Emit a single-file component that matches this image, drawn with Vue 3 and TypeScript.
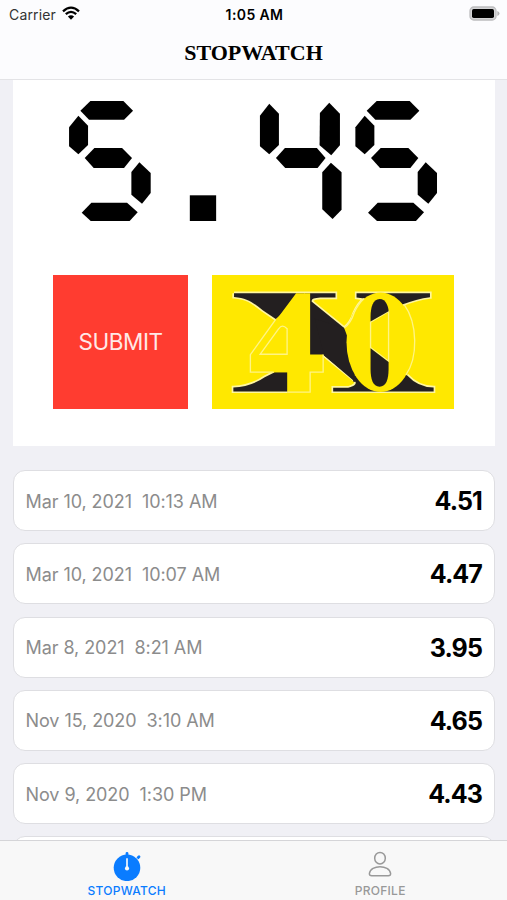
<script setup lang="ts">
import { computed, ref } from 'vue'

interface Solve {
  date: string
  time: string
  result: string
}

// Lit segments for each character, on a 286-unit wide cell.
const CELL = 286.4
const segments: Record<string, string[]> = {
  '5': [
    '34,77 64,48 163,48 192,77 165,104 60,104',
    '0,127 28,92 57,122 57,180 28,208 0,184',
    '47,219 76,189 159,189 189,219 165,249 74,249',
    '187,261 211,232 245,264 245,324 219,356 187,329',
    '38,383 67,353 174,353 206,382 181,409 66,409',
  ],
  '.': ['76,331 155,331 155,409 76,409'],
  '4': [
    '0,92 28,56 57,86 57,180 28,208 0,184',
    '180,84 208,53 240,86 240,181 214,211 179,181',
    '48,219 75,189 171,189 197,219 173,249 76,249',
    '187,262 213,233 245,262 245,374 218,402 187,373',
  ],
}

const elapsed = ref('5.45')
const cells = computed(() =>
  [...elapsed.value].map((char, i) => ({ shapes: segments[char] ?? [], x: i * CELL })),
)

const solves: Solve[] = [
  { date: 'Mar 10, 2021', time: '10:13 AM', result: '4.51' },
  { date: 'Mar 10, 2021', time: '10:07 AM', result: '4.47' },
  { date: 'Mar 8, 2021', time: '8:21 AM', result: '3.95' },
  { date: 'Nov 15, 2020', time: '3:10 AM', result: '4.65' },
  { date: 'Nov 9, 2020', time: '1:30 PM', result: '4.43' },
]
const tab = ref<'stopwatch' | 'profile'>('stopwatch')
</script>

<template>
  <div class="screen">
    <header class="top">
      <div class="status">
        <div class="carrier">
          <span>Carrier</span>
          <svg class="wifi" viewBox="0 0 18 14">
            <path d="M1 5.3Q9-2 17 5.3" />
            <path d="M3.8 8.2Q9 3.5 14.2 8.2" />
            <path class="solid" d="M5.9 10.5Q9 7.8 12.1 10.5L9 13.7Z" />
          </svg>
        </div>
        <span class="clock">1:05 AM</span>
        <div class="power">
          <svg class="battery" viewBox="0 0 31 15">
            <rect x="1" y="1" width="26" height="13" rx="3.8" fill="#d4d4d6" stroke="#bcbcbe" stroke-width="1.3" />
            <rect x="3" y="3" width="22" height="9" rx="1.7" fill="#000" />
            <path d="M28.3 5.1Q30.5 5.8 30.5 7.5T28.3 9.9Z" fill="#b4b4b6" />
          </svg>
        </div>
      </div>
      <h1>STOPWATCH</h1>
    </header>

    <main>
      <section class="timer">
        <svg class="display" viewBox="0 48 1107 361" role="img" :aria-label="elapsed">
          <g v-for="(cell, i) in cells" :key="i" :transform="`translate(${cell.x} 0)`">
            <polygon v-for="points in cell.shapes" :key="points" :points="points" />
          </g>
        </svg>
        <div class="actions">
          <button class="submit">SUBMIT</button>
          <button class="brand" aria-label="Start">
            <svg viewBox="22 18 725 404" preserveAspectRatio="none">
              <g class="halo">
                <path d="M88 73H392V86H346Q316 88 321 99L418 178Q438 164 448 132Q460 105 478 89L455 86V73H675V85Q635 90 590 108" />
                <path d="M88 73V84C130 88 142 99 174 124L213 151M207 312L180 326Q140 354 86 357V369H248M357 260L449 335Q462 349 430 358H385V369H686V357Q640 357 606 320" />
              </g>
              <g class="ink">
                <path d="M88 73H392V86H346Q316 88 321 99L418 178L445 210V340H455L357 260H300V73L213 151L174 124C142 99 130 88 88 84Z" />
                <path d="M418 178L450 150V340L357 260L330 150Z" />
                <path d="M455 73H675V85Q635 90 590 108L527 100L478 89L455 86Z" />
                <path d="M248 311H210L180 326Q140 354 86 357V369H248Z" />
                <path d="M385 369H686V357Q640 357 606 320L527 300L440 325L449 335Q462 349 430 358H385Z" />
              </g>
              <path class="paint" d="M418 178Q438 164 448 132Q460 105 478 89L490 130L450 180L426 200Z" />
              <path class="paint" d="M274 73L137 258V311H248V371H316V311H355V258H316V73Z" />
              <path class="line" d="M213 152L137 258V311H207M248 371H316V311H355V258M166 257L222 180Q232 164 247 180V257Z" />
              <ellipse class="paint" cx="527" cy="221" rx="102" ry="150" />
              <path class="line" d="M597 106C639 165 639 267 603 319" />
              <path class="line" d="M418 178Q438 164 448 132Q460 105 478 89" />
              <path class="line" d="M497 160V237L551 278V128Z" />
              <g class="ink">
                <path d="M497 158V145C497 115 504 90 524 90S551 115 551 127Z" />
                <path d="M497 239V301C497 333 504 355 524 355S551 333 551 301V280Z" />
              </g>
            </svg>
          </button>
        </div>
      </section>

      <ul class="solves">
        <li v-for="(solve, i) in solves" :key="i">
          <span class="when">{{ solve.date }}&nbsp; {{ solve.time }}</span>
          <strong>{{ solve.result }}</strong>
        </li>
        <li></li>
      </ul>
    </main>

    <nav>
      <a :class="{ active: tab === 'stopwatch' }" @click="tab = 'stopwatch'">
        <svg viewBox="0 0 30 30">
          <circle cx="15" cy="16.8" r="13.3" fill="currentColor" />
          <path d="M15 2.3V5M25.8 7L27 5.8" stroke="currentColor" stroke-width="2.8" stroke-linecap="round" />
          <path d="M23.8 6.2L26.8 8.8" stroke="#f9f9f9" stroke-width=".6" />
          <path d="M15 8V17" stroke="#d9eaff" stroke-width="1.9" stroke-linecap="round" />
          <circle cx="15" cy="17.4" r="2.1" fill="#f9f9f9" />
        </svg>
        <span>STOPWATCH</span>
      </a>
      <a :class="{ active: tab === 'profile' }" @click="tab = 'profile'">
        <svg viewBox="0 0 30 30" fill="none" stroke="currentColor" stroke-width="1.5">
          <ellipse cx="15" cy="7.2" rx="5.3" ry="5.8" />
          <path d="M6.8 24.7Q4.1 24.7 4.4 22.4C5 18 10 15.7 15 15.7S25 18 25.6 22.4Q25.9 24.7 23.2 24.7Z" />
        </svg>
        <span>PROFILE</span>
      </a>
    </nav>
  </div>
</template>

<style>
body {
  margin: 0;
}
</style>

<style scoped>
.screen {
  width: 507px;
  height: 900px;
  display: flex;
  flex-direction: column;
  overflow: hidden;
  background: #f0f0f5;
  font-family: Inter, 'Liberation Sans', sans-serif;
  color: #000;
}
.top {
  flex: none;
  box-sizing: border-box;
  height: 80px;
  background: #fcfcfe;
  border-bottom: 1.5px solid #e3e3e6;
}
.status {
  display: grid;
  grid-template-columns: 1fr auto 1fr;
  align-items: center;
  height: 28px;
  padding: 0 7px 0 9px;
  font-size: 14px;
}
.carrier {
  display: flex;
  align-items: center;
  gap: 6px;
  color: #333;
  letter-spacing: 0.15px;
}
.wifi {
  width: 18px;
  height: 14px;
  margin-top: -3px;
  fill: none;
  stroke: #000;
  stroke-width: 2.3;
}
.wifi .solid {
  fill: #000;
  stroke: none;
}
.clock {
  font-weight: 600;
  letter-spacing: 0.4px;
}
.power {
  display: flex;
  justify-content: flex-end;
}
.battery {
  width: 31px;
  height: 15px;
  margin-top: -2px;
}
h1 {
  margin: 12px 0 0;
  font: 700 22px/26px 'Liberation Serif', serif;
  text-align: center;
}
main {
  flex: 1;
  min-height: 0;
  overflow: hidden;
  padding: 0 12.5px;
}
.timer {
  box-sizing: border-box;
  height: 366px;
  padding-top: 21px;
  display: flex;
  flex-direction: column;
  align-items: center;
  gap: 53.5px;
  background: #fff;
}
.display {
  width: 369px;
  height: 120.3px;
  margin-right: 1px;
}
.actions {
  display: flex;
  gap: 24px;
}
button {
  padding: 0;
  border: 0;
  height: 134px;
}
.submit {
  width: 134.5px;
  background: #ff3c30;
  color: #ffe9e7;
  font: 400 22.5px Inter, sans-serif;
  letter-spacing: -0.45px;
}
.brand {
  width: 242px;
  background: #ffe800;
}
.brand svg {
  display: block;
  width: 100%;
  height: 100%;
}
.halo {
  fill: none;
  stroke: #fff6a0;
  stroke-width: 10;
}
.ink {
  fill: #231f20;
}
.paint {
  fill: #ffe800;
}
.line {
  fill: none;
  stroke: #fff485;
  stroke-width: 4;
}
.solves {
  list-style: none;
  margin: 24px 0 0;
  padding: 0;
  display: flex;
  flex-direction: column;
  gap: 12.3px;
}
.solves li {
  flex: none;
  box-sizing: border-box;
  height: 61px;
  padding: 1px 12px 0;
  display: flex;
  align-items: center;
  justify-content: space-between;
  background: #fff;
  border: 1px solid #dedee2;
  border-radius: 12px;
}
.when {
  color: #8c8c8c;
  font-size: 18px;
  letter-spacing: -0.07px;
}
.solves strong {
  font-size: 25px;
  font-weight: 700;
  letter-spacing: -0.9px;
  margin-right: -0.5px;
}
nav {
  flex: none;
  box-sizing: border-box;
  height: 60px;
  display: grid;
  grid-template-columns: 1fr 1fr;
  background: #f8f8f8;
  border-top: 1px solid #d5d5d8;
}
nav a {
  display: flex;
  flex-direction: column;
  align-items: center;
  padding-top: 10px;
  gap: 2px;
  color: #999;
  font-size: 12px;
  line-height: 15px;
  font-weight: 500;
  letter-spacing: 0.25px;
}
nav a.active {
  color: #0a7cff;
}
nav svg {
  width: 30px;
  height: 30px;
}
</style>
